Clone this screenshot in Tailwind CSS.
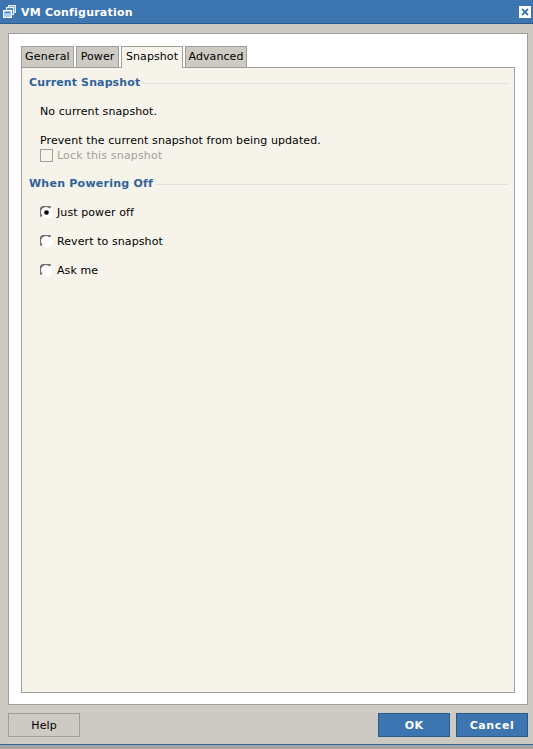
<!DOCTYPE html>
<html lang="en">
<head>
    <meta charset="UTF-8">
    <title>VM Configuration</title>
    <script src="https://cdn.jsdelivr.net/npm/@tailwindcss/browser@4"></script>
</head>
<body class="w-[533px] h-[749px] overflow-hidden bg-[#cdcac3] font-['DejaVu_Sans',sans-serif] text-[11px] tracking-[0.09px] text-black flex flex-col">
    <!-- title bar -->
    <div class="h-[24px] shrink-0 bg-[#3c75b0] border-b border-[#2a5a8c] flex items-center pl-[3px] pr-[2px]">
        <svg width="13" height="13" viewBox="0 0 13 13" class="shrink-0">
            <rect x="5.5" y="0.5" width="7" height="7" fill="#7fb0e0" stroke="#e6eff8"/>
            <rect x="3.5" y="2.5" width="7" height="7" fill="#4f8cca" stroke="#f0f5fa"/>
            <rect x="0.5" y="5.5" width="8" height="7" fill="#a9cff2" stroke="#fff"/>
            <rect x="2" y="7" width="5" height="1" fill="#2f6fb5"/>
        </svg>
        <span class="ml-[5px] mt-[3px] font-bold text-white tracking-[0.22px]">VM Configuration</span>
        <div class="ml-auto w-[12px] h-[12px] bg-white flex items-center justify-center">
            <svg width="8" height="8" viewBox="0 0 8 8"><path d="M1 1l6 6M7 1l-6 6" stroke="#3c75b0" stroke-width="1.8"/></svg>
        </div>
    </div>

    <!-- white panel -->
    <div class="mt-[9px] ml-[8px] w-[520px] h-[672px] bg-white border border-[#a09e99] pt-[12px] pl-[12px] pr-[12px] pb-[11px] flex flex-col">
        <div class="flex items-start h-[21px] shrink-0 relative z-10">
            <div class="w-[53px] h-[21px] bg-[#cdcac3] border border-b-0 border-[#a09e99] flex items-center justify-center tracking-[0.2px]">General</div>
            <div class="ml-[2px] w-[43px] h-[21px] bg-[#cdcac3] border border-b-0 border-[#a09e99] flex items-center justify-center">Power</div>
            <div class="ml-[2px] w-[62px] h-[22px] bg-[#f6f3ea] border border-b-0 border-[#a09e99] flex items-center justify-center">Snapshot</div>
            <div class="ml-[2px] w-[62px] h-[21px] bg-[#cdcac3] border border-b-0 border-[#a09e99] flex items-center justify-center">Advanced</div>
        </div>
        <div class="flex-1 bg-[#f6f3ea] border border-[#a09e99] pt-[8px] pl-[7px] pr-[6px]">
            <div class="flex items-center h-[15px] font-bold text-[#2f6399] tracking-[0.12px]">
                <span>Current Snapshot</span>
                <div class="ml-[2px] flex-1 h-px bg-[#e4e2db]"></div>
            </div>
            <p class="mt-[14px] ml-[11px] h-[14px] leading-[14px]">No current snapshot.</p>
            <p class="mt-[15px] ml-[11px] h-[14px] leading-[14px]">Prevent the current snapshot from being updated.</p>
            <div class="mt-px ml-[11px] h-[14px] flex items-center text-[#a3a19c]">
                <span class="w-[13px] h-[13px] -mt-[2px] border border-[#a09e99] bg-[#f6f3ea] shrink-0"></span>
                <span class="ml-[4px] tracking-[0.17px]">Lock this snapshot</span>
            </div>
            <div class="mt-[14px] flex items-center h-[15px] font-bold text-[#2f6399] tracking-[0.24px]">
                <span>When Powering Off</span>
                <div class="ml-[2px] flex-1 h-px bg-[#e4e2db]"></div>
            </div>
            <div class="mt-[14px] ml-[11px] flex flex-col gap-[15px]">
                <div class="h-[14px] flex items-center">
                    <svg width="13" height="13" viewBox="0 0 13 13" class="shrink-0 -mt-[2px]">
                        <circle cx="6.5" cy="6.5" r="6" fill="#fff"/>
                        <path d="M1.7 10.5A5.3 5.3 0 0 1 10.5 1.7" fill="none" stroke="#706f6b" stroke-width="2"/>
                        <circle cx="6.5" cy="6.5" r="2.3" fill="#000"/>
                    </svg>
                    <span class="ml-[4px]">Just power off</span>
                </div>
                <div class="h-[14px] flex items-center">
                    <svg width="13" height="13" viewBox="0 0 13 13" class="shrink-0 -mt-[2px]">
                        <circle cx="6.5" cy="6.5" r="6" fill="#fff"/>
                        <path d="M1.7 10.5A5.3 5.3 0 0 1 10.5 1.7" fill="none" stroke="#706f6b" stroke-width="2"/>
                    </svg>
                    <span class="ml-[4px]">Revert to snapshot</span>
                </div>
                <div class="h-[14px] flex items-center">
                    <svg width="13" height="13" viewBox="0 0 13 13" class="shrink-0 -mt-[2px]">
                        <circle cx="6.5" cy="6.5" r="6" fill="#fff"/>
                        <path d="M1.7 10.5A5.3 5.3 0 0 1 10.5 1.7" fill="none" stroke="#706f6b" stroke-width="2"/>
                    </svg>
                    <span class="ml-[4px]">Ask me</span>
                </div>
            </div>
        </div>
    </div>

    <!-- buttons -->
    <div class="mt-[8px] ml-[8px] w-[520px] h-[24px] flex shrink-0">
        <button class="w-[72px] h-[24px] pt-[2px] border border-[#a09e99] bg-[#cdcac3]">Help</button>
        <button class="ml-auto w-[72px] h-[24px] pt-[2px] border border-[#2a5a8c] bg-[#3c75b0] text-white font-bold tracking-[0.3px]">OK</button>
        <button class="ml-[6px] w-[72px] h-[24px] pt-[2px] border border-[#2a5a8c] bg-[#3c75b0] text-white font-bold tracking-[0.6px]">Cancel</button>
    </div>

    <!-- window bottom edge -->
    <div class="mt-[7px] h-px bg-[#2f6399] shrink-0"></div>
    <div class="flex-1 bg-[#a3a3a3]"></div>
</body>
</html>
